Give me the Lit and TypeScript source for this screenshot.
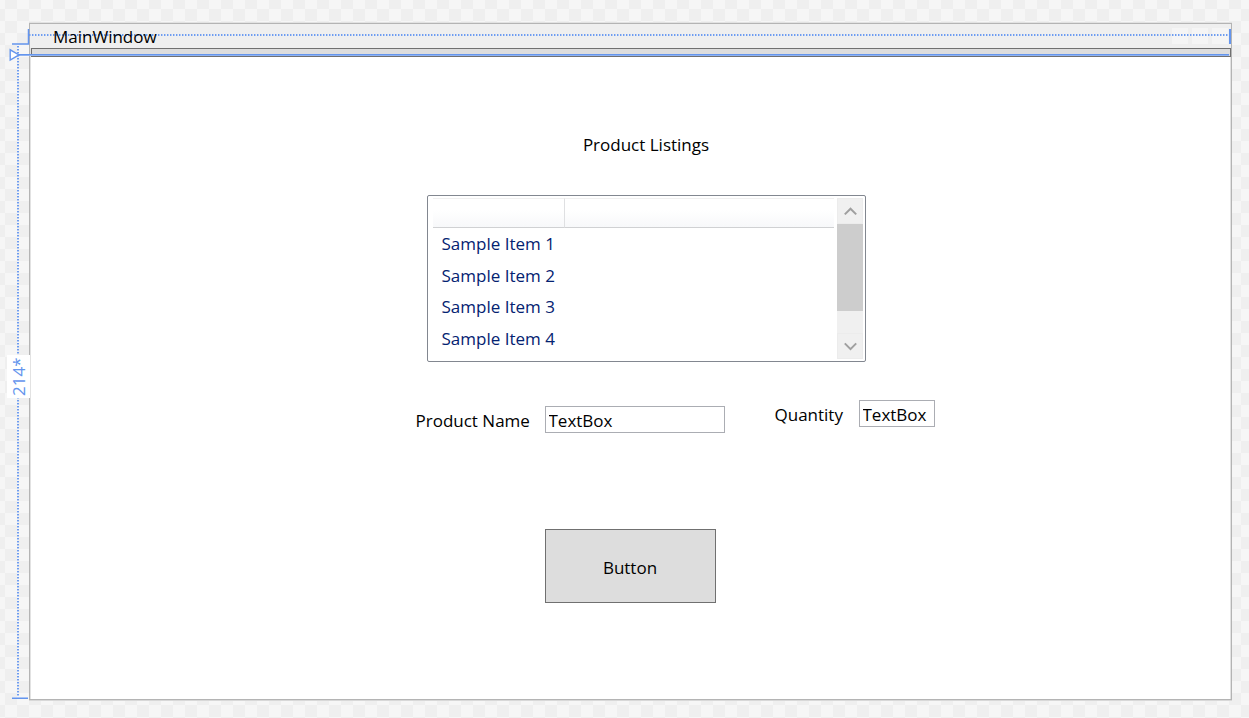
import { LitElement, html, css } from "lit";
import { customElement } from "lit/decorators.js";

@customElement("design-adorners")
class DesignAdorners extends LitElement {
  static styles = css`
    :host { position: absolute; inset: 0; pointer-events: none; color: #6495ed; }
    .across, .down, .corner, .edge, .guide, .foot, .handle, .size { position: absolute; }
    .across {
      left: 29px; right: 20px; top: 34px; height: 2px;
      background: repeating-linear-gradient(90deg, #6f9cee 0 1px, #b3cbf6 1px 2px, transparent 2px 3px);
    }
    .down {
      left: 17px; top: 46px; bottom: 21px; width: 2px;
      background: repeating-linear-gradient(180deg, #6f9cee 0 1px, #b3cbf6 1px 2px, transparent 2px 3px);
    }
    .corner { left: 12px; top: 29px; }
    .edge { right: 18px; top: 29px; width: 2px; height: 15px; background: #6495ed; }
    .guide { left: 19px; right: 20px; top: 54px; height: 1px; background: #6495ed; border-bottom: 1px solid #8fb2f1; }
    .foot { left: 12px; bottom: 19px; width: 16px; height: 1px; background: #6495ed; border-top: 1px solid #a9c4f5; }
    .handle { left: 9px; top: 48px; }
    .size {
      left: 7px; top: 355px; width: 23px; height: 43px; background: #fff;
      writing-mode: vertical-rl; transform: rotate(180deg);
      display: flex; align-items: center; justify-content: center;
      font-size: 17px; line-height: 23px;
    }
    svg { display: block; }
  `;
  render() {
    return html`
      <div class="across"></div>
      <div class="down"></div>
      <svg class="corner" width="18" height="16" fill="none" stroke="#6495ed" stroke-width="1.5">
        <path d="M0 15H16.5V0" />
      </svg>
      <div class="edge"></div>
      <div class="guide"></div>
      <div class="foot"></div>
      <svg class="handle" width="12" height="14" fill="#fff" stroke="#6495ed" stroke-width="1.4">
        <path d="M1.2 1.8V12L10 6.9Z" />
      </svg>
      <div class="size">214*</div>
    `;
  }
}

@customElement("product-list")
class ProductList extends LitElement {
  static styles = css`
    :host { display: block; }
    .frame {
      display: flex; gap: 3px; height: 167px; box-sizing: border-box;
      border: 1px solid #828790; border-radius: 2px; background: #fff; padding: 2px 2px 2px 5px;
    }
    table { flex: 1; border-collapse: separate; border-spacing: 0; table-layout: fixed; align-self: flex-start; color: #042271; }
    .first { width: 131px; }
    th {
      height: 30px; padding: 0; box-sizing: border-box; border-top: 1px solid #f0f0f0;
      border-bottom: 1px solid #d0d1d3; background: linear-gradient(#fff 40%, #f7f8fa);
    }
    th + th { border-left: 1px solid #dfe0e2; }
    td { height: 32px; padding: 0 0 0 9px; line-height: 24px; white-space: nowrap; }
    tr:nth-child(even) td { height: 31px; }
    .bar { width: 26px; display: flex; flex-direction: column; background: #f0f0f0; }
    .bar button { height: 26px; padding: 0; border: 1px solid #ececec; background: #f0f0f0; display: grid; place-items: center; }
    .thumb { height: 87px; background: #cdcdcd; }
    .rest { flex: 1; }
  `;
  render() {
    return html`
      <div class="frame">
        <table>
          <thead><tr><th class="first"></th><th></th></tr></thead>
          <tbody>
            ${[1, 2, 3, 4].map((n) => html`<tr><td colspan="2">Sample Item ${n}</td></tr>`)}
          </tbody>
        </table>
        <div class="bar">
          <button aria-label="Scroll up">
            <svg width="14" height="10" fill="none" stroke="#9f9f9f" stroke-width="2"><path d="M1.8 8.4L7.5 2.7L13.2 8.4" /></svg>
          </button>
          <div class="thumb"></div>
          <div class="rest"></div>
          <button aria-label="Scroll down">
            <svg width="14" height="10" fill="none" stroke="#9f9f9f" stroke-width="2"><path d="M1.8 2.4L7.5 8.1L13.2 2.4" /></svg>
          </button>
        </div>
      </div>
    `;
  }
}

@customElement("app-root")
class AppRoot extends LitElement {
  static styles = css`
    :host {
      display: flex; position: relative; box-sizing: border-box; min-height: 100vh;
      padding: 23px 17px 18px 29px;
      background: repeating-conic-gradient(#efefef 0 25%, #f6f6f6 0 50%) 5px 9px / 24px 24px;
      font-family: "Open Sans", "Noto Sans", sans-serif; font-size: 17px; line-height: 24px; color: #000;
    }
    .window {
      flex: 1; display: flex; flex-direction: column; background: #fff;
      border: 1px solid #b4b4b4; box-shadow: inset 1px 0 #e2e2e2, inset -1px 0 #e2e2e2, 0 1px #d8d8d8, 0 -1px #e2e2e2;
    }
    .title {
      display: flex; align-items: center; justify-content: space-between; box-sizing: border-box;
      height: 24px; padding: 2px 3px 0 23px; background: #efefef;
    }
    .caption { position: relative; z-index: 1; }
    .controls { display: flex; gap: 4px; margin-bottom: 2px; }
    .controls i { width: 16px; height: 16px; background: #f5f5f5; }
    .strip { height: 9px; box-sizing: border-box; margin-left: 1px; border: 1px solid #707070; background: #ddd; }
    .body { display: flex; justify-content: center; padding: 76px 0 32px 90px; }
    .form { width: 520px; }
    .listing { width: 439px; margin-left: 11px; text-align: center; }
    .listing product-list { margin-top: 38px; text-align: left; }
    .fields { display: flex; justify-content: space-between; align-items: flex-start; margin-top: 38px; padding-right: 1px; }
    .field { display: flex; align-items: center; justify-content: space-between; }
    .name { width: 309px; margin-top: 6px; }
    .quantity { width: 160px; }
    label { padding-top: 2px; }
    input {
      box-sizing: border-box; height: 27px; padding: 2px 3px 0; border: 1px solid #abadb3; border-radius: 0;
      background: #fff; font: inherit; color: #000; outline: none;
    }
    .name input { width: 180px; }
    .quantity input { width: 76px; }
    .action {
      display: block; width: 171px; height: 74px; margin: 96px 0 0 129px; padding: 4px 0 0;
      border: 1px solid #707070; border-radius: 0; background: #ddd; font: inherit; color: #000;
    }
  `;
  render() {
    return html`
      <div class="window">
        <div class="title"><span class="caption">MainWindow</span><div class="controls"><i></i><i></i><i></i></div></div>
        <div class="strip"></div>
        <main class="body">
          <div class="form">
            <div class="listing">
              <div>Product Listings</div>
              <product-list></product-list>
            </div>
            <div class="fields">
              <div class="field name"><label for="name">Product Name</label><input id="name" value="TextBox" /></div>
              <div class="field quantity"><label for="qty">Quantity</label><input id="qty" value="TextBox" /></div>
            </div>
            <button class="action">Button</button>
          </div>
        </main>
      </div>
      <design-adorners></design-adorners>
    `;
  }
}
